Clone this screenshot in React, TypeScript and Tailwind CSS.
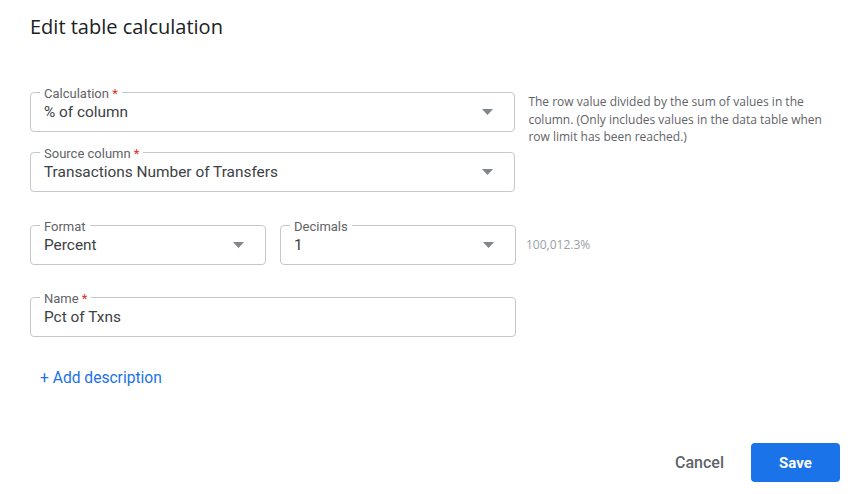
import React from 'react'

function Arrow() {
  return (
    <svg width="11" height="6" viewBox="0 0 11 6" className="shrink-0">
      <path d="M0 0 L11 0 L5.5 6 Z" fill="#80868b" />
    </svg>
  )
}

function Field({ label, value, required, select, className }: { label: string; value: string; required?: boolean; select?: boolean; className?: string }) {
  return (
    <div className={`relative h-10 rounded border border-[#c4c7cc] flex items-center pl-[13px] pr-[21px] ${className ?? ''}`}>
      <div className="absolute left-[9px] -top-[6px] bg-white px-[4px] text-[13px] leading-[14px] text-[#5f6368]">
        {label}
        {required && <span className="text-[#d93025]"> *</span>}
      </div>
      <div className="flex-1 text-[15.4px] text-[#3c4043] pt-[1px]">{value}</div>
      {select && <Arrow />}
    </div>
  )
}

export default function App() {
  return (
    <div className="w-[867px] h-[494px] bg-white font-['Roboto',sans-serif] pl-[30px] pr-[27px] pt-[15px] flex flex-col">
      <h1 className="text-[20px] leading-6 text-[#202124] font-['Open_Sans',sans-serif]">Edit table calculation</h1>

      <div className="flex mt-[53px]">
        <div className="w-[486px] flex flex-col">
          <Field label="Calculation" required value="% of column" select />
          <Field label="Source column" required value="Transactions Number of Transfers" select className="mt-5" />
        </div>
        <p className="ml-[13px] mt-[1px] w-[312px] text-[12px] leading-[17.5px] text-[#5f6368] font-['Open_Sans',sans-serif]">
          The row value divided by the sum of values in the column. (Only includes values in the data table when row limit has been reached.)
        </p>
      </div>

      <div className="flex items-center mt-[33px]">
        <Field label="Format" value="Percent" select className="w-[236px]" />
        <Field label="Decimals" value="1" select className="w-[236px] ml-[14px]" />
        <span className="ml-[10px] text-[12px] text-[#9aa0a6] font-['Open_Sans',sans-serif]">100,012.3%</span>
      </div>

      <Field label="Name" required value="Pct of Txns" className="w-[486px] mt-[32px]" />

      <div className="mt-[30px] pl-[10px] text-[15.6px] text-[#1a73e8]">+ Add description</div>

      <div className="flex justify-end items-center mt-[53px]">
        <button className="text-[16px] text-[#5f6368] font-medium mr-[27px]">Cancel</button>
        <button className="w-[89px] h-[39px] rounded bg-[#1a73e8] text-white text-[15px] font-bold">Save</button>
      </div>
    </div>
  )
}
